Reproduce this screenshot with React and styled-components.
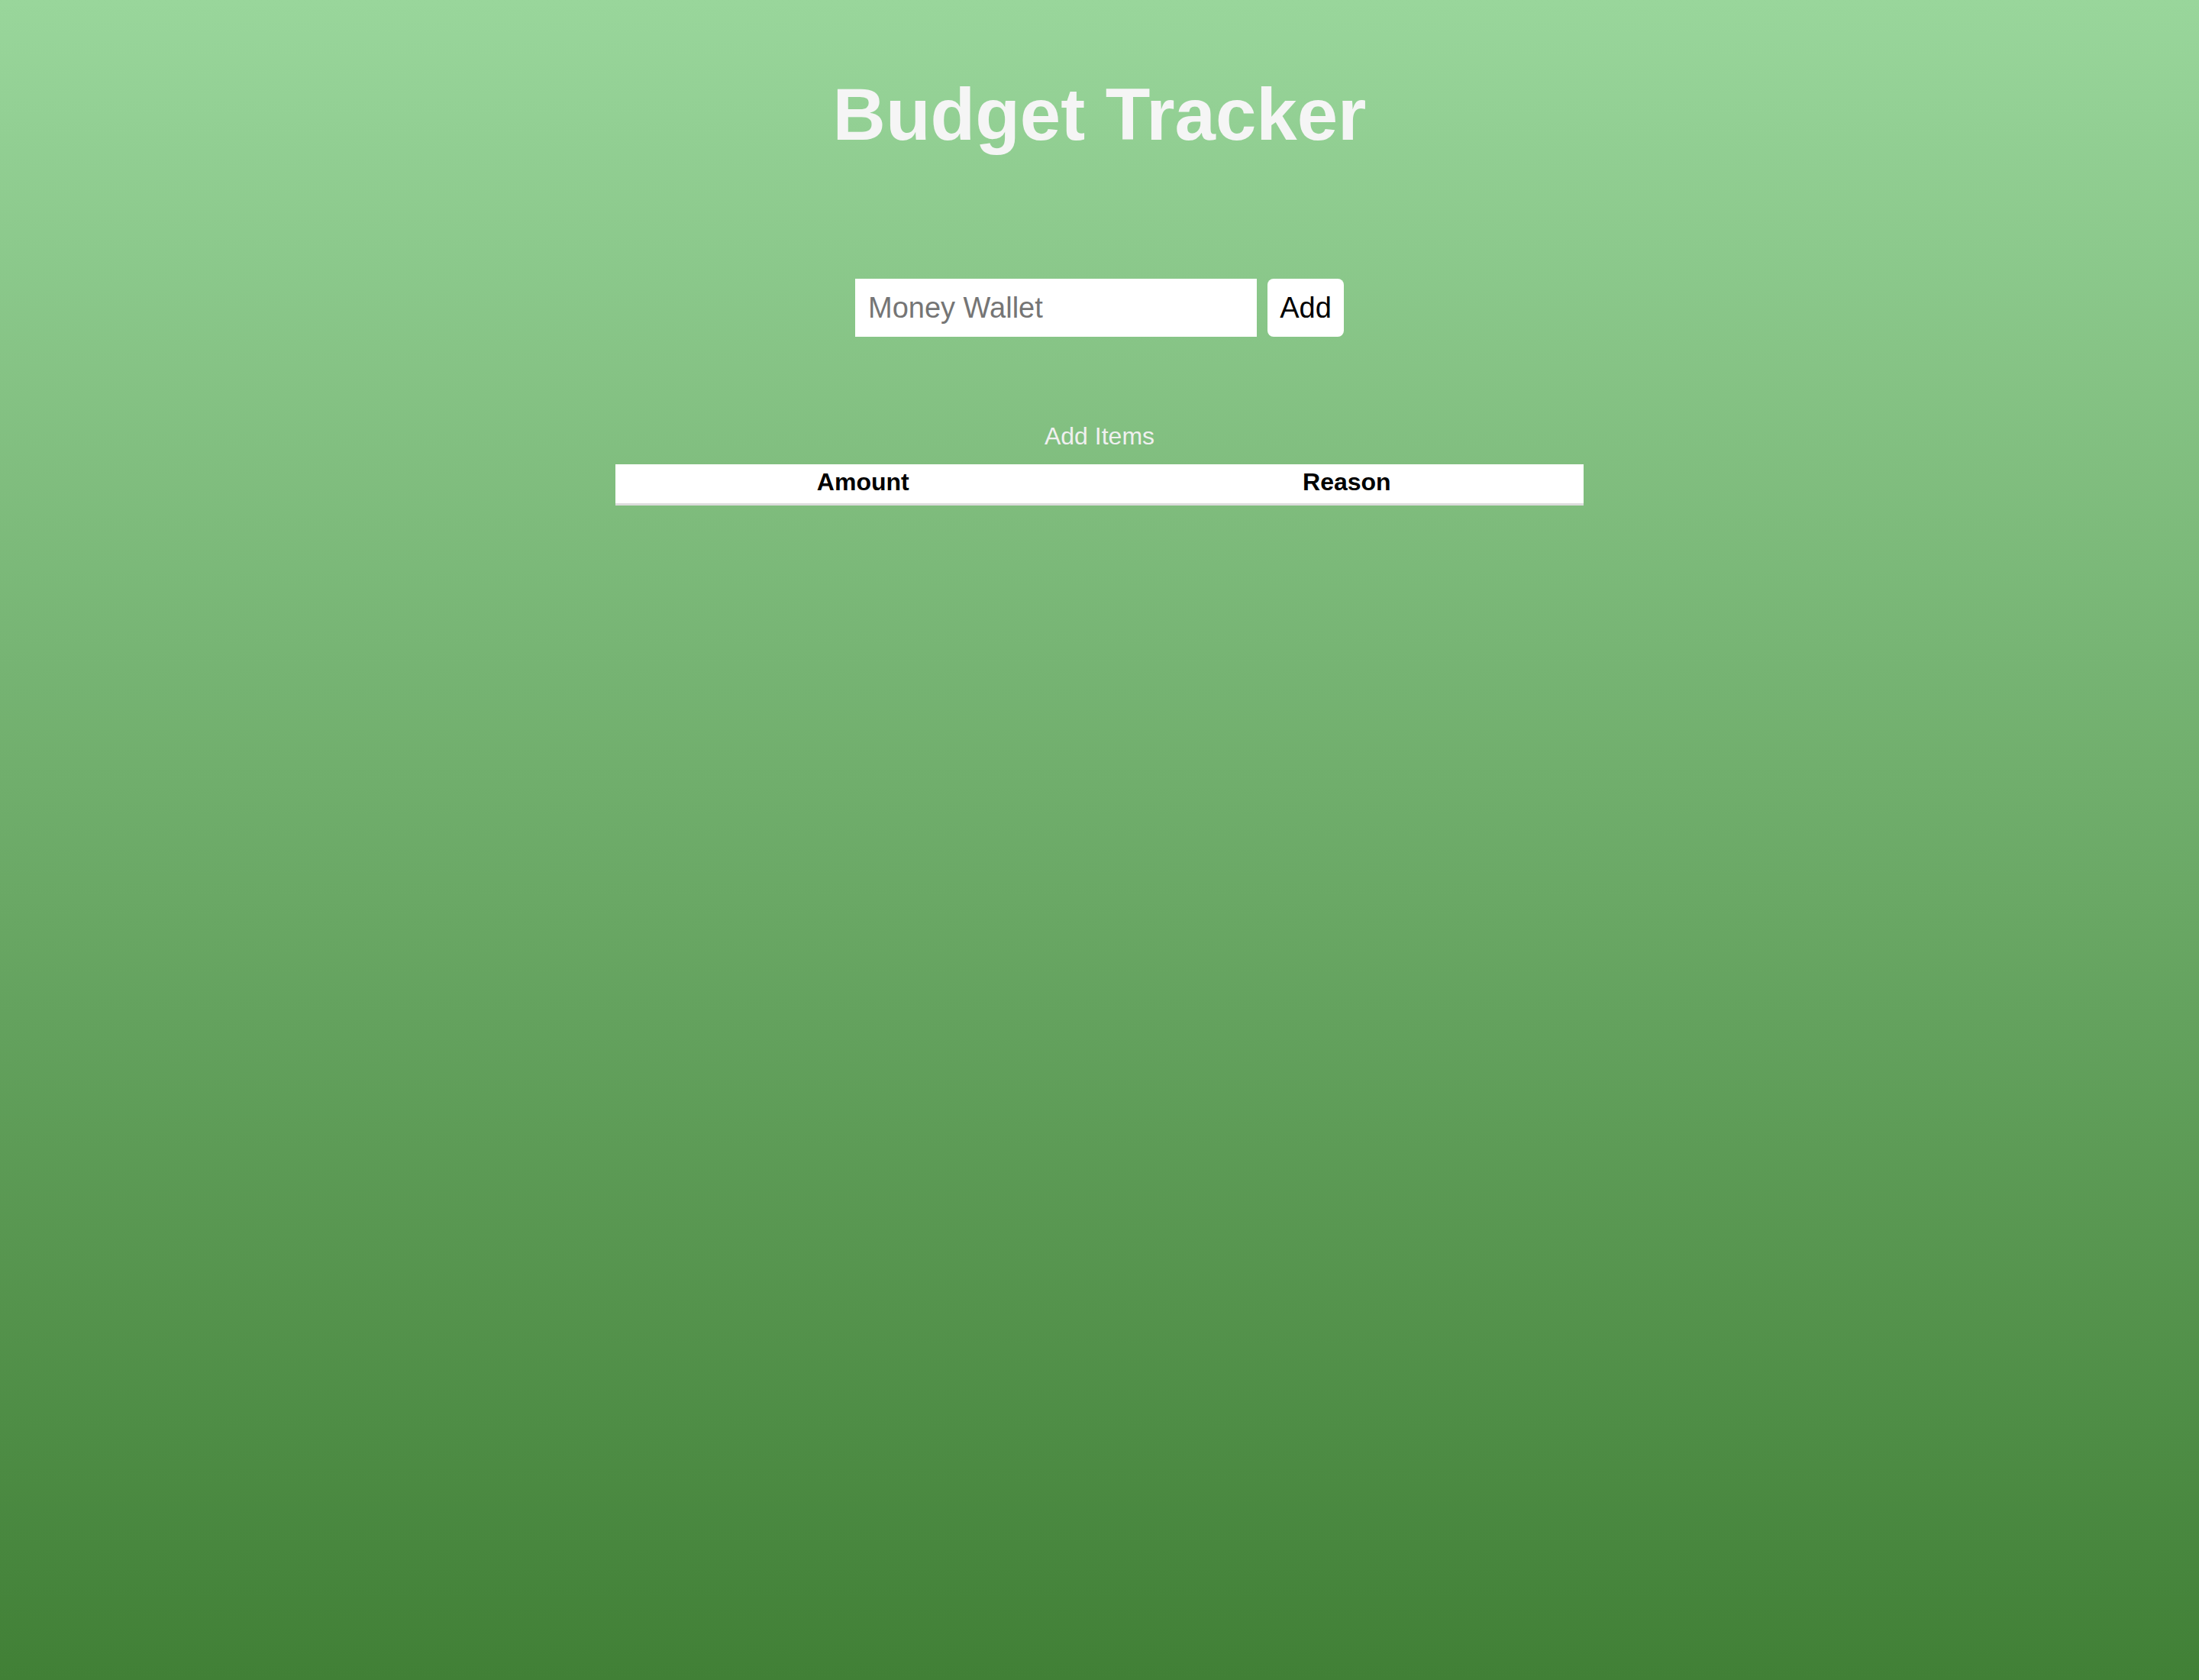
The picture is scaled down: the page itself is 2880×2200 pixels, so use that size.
import React, { useState } from "react";
import styled, { createGlobalStyle } from "styled-components";

const GlobalStyle = createGlobalStyle`
  html, body {
    margin: 0;
    padding: 0;
  }
  body {
    font-family: "Liberation Sans", Arial, sans-serif;
  }
`;

const Page = styled.div`
  min-height: 100vh;
  box-sizing: border-box;
  padding-top: 95px;
  background: linear-gradient(to bottom, #99d69b, #418036);
  display: flex;
  flex-direction: column;
  align-items: center;
`;

const Title = styled.h1`
  margin: 0;
  font-size: 96px;
  font-weight: bold;
  color: #f5f5f5;
  line-height: normal;
`;

const WalletForm = styled.form`
  margin-top: 160px;
  display: flex;
  gap: 14px;
`;

const WalletInput = styled.input`
  width: 526px;
  height: 76px;
  box-sizing: border-box;
  padding: 0 17px;
  border: none;
  border-radius: 0;
  outline: none;
  font-family: "Liberation Sans", Arial, sans-serif;
  font-size: 38px;
  background: #fff;
  color: #000;

  &::placeholder {
    color: #757575;
  }
`;

const AddButton = styled.button`
  width: 100px;
  height: 76px;
  border: none;
  border-radius: 8px;
  background: #fff;
  color: #000;
  font-family: "Liberation Sans", Arial, sans-serif;
  font-size: 38px;
  cursor: pointer;
`;

const ItemsTable = styled.table`
  margin-top: 112px;
  width: 44%;
  border-collapse: collapse;
`;

const Caption = styled.caption`
  padding-bottom: 18px;
  font-size: 32px;
  color: #f0f0f0;
  line-height: normal;
`;

const HeadCell = styled.th`
  background: #fff;
  padding: 5px 0 9px;
  font-size: 32px;
  font-weight: bold;
  color: #000;
  line-height: normal;
  border-bottom: 3px solid #dcdcdc;
`;

const App = () => {
  const [wallet, setWallet] = useState("");
  const [items, setItems] = useState([]);

  const onSubmit = (e) => {
    e.preventDefault();
    if (wallet === "") return;
    setItems([...items, { amount: wallet, reason: "" }]);
    setWallet("");
  };

  return (
    <>
      <GlobalStyle />
      <Page>
        <Title>Budget Tracker</Title>
        <WalletForm onSubmit={onSubmit}>
          <WalletInput
            placeholder="Money Wallet"
            value={wallet}
            onChange={(e) => setWallet(e.target.value)}
          />
          <AddButton type="submit">Add</AddButton>
        </WalletForm>
        <ItemsTable>
          <Caption>Add Items</Caption>
          <thead>
            <tr>
              <HeadCell>Amount</HeadCell>
              <HeadCell>Reason</HeadCell>
            </tr>
          </thead>
          <tbody>
            {items.map((item, i) => (
              <tr key={i}>
                <td>{item.amount}</td>
                <td>{item.reason}</td>
              </tr>
            ))}
          </tbody>
        </ItemsTable>
      </Page>
    </>
  );
};

export default App;
